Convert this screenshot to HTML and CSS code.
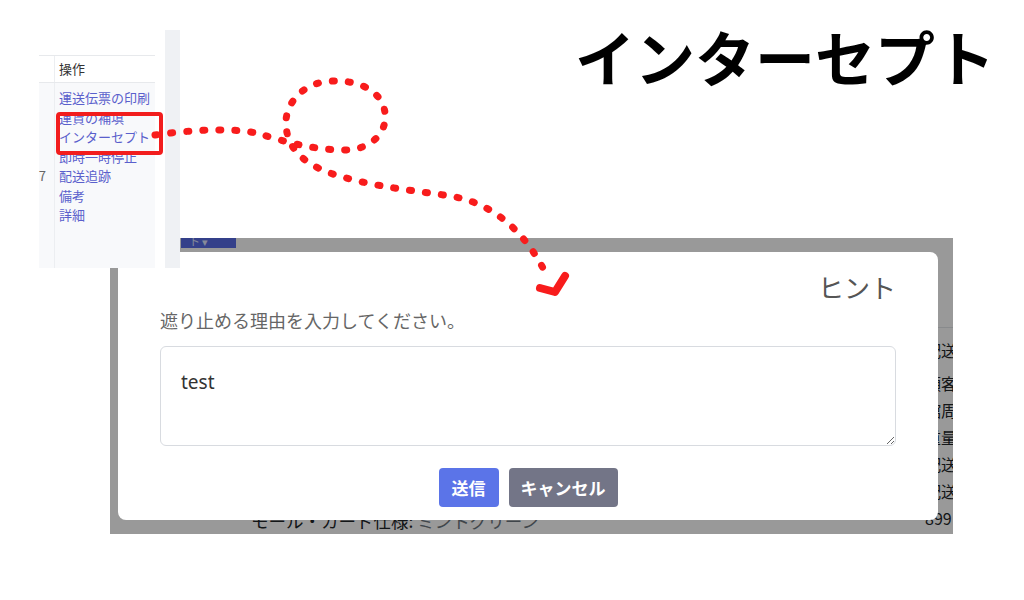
FILE: index.html
```html
<!DOCTYPE html>
<html lang="ja">
<head>
  <meta charset="UTF-8" />
  <meta name="viewport" content="width=device-width, initial-scale=1.0" />
  <title>インターセプト</title>
  <link rel="stylesheet" href="styles.css">
</head>
<body>
  <div class="canvas">

    <!-- Part 1: cropped order table, operations column -->
    <div class="snippet">
      <div class="tbl">
        <div class="tbl-top"></div>
        <div class="tbl-head">
          <div class="cell-id"></div>
          <div class="cell-ops">操作</div>
        </div>
        <div class="tbl-body">
          <div class="cell-id">
            <span></span><span></span><span></span><span></span><span>7</span>
          </div>
          <div class="cell-ops">
            <a>運送伝票の印刷</a>
            <a>運賃の補填</a>
            <a>インターセプト</a>
            <a>即時一時停止</a>
            <a>配送追跡</a>
            <a>備考</a>
            <a>詳細</a>
          </div>
        </div>
      </div>
      <div class="tbl-gap"></div>
      <div class="tbl-strip"></div>
      <div class="mark"></div>
    </div>

    <h1 class="title">インターセプト</h1>

    <!-- Part 2: the dialog opened from the link -->
    <div class="shot">
      <div class="page">
        <div class="tabbar"><div class="tab">ト ▾</div></div>
        <p class="spec">モール・カード仕様: <span>ミントグリーン</span></p>
        <div class="side">
          <div class="side-head">配送情報</div>
          <div class="side-row">顧客名</div>
          <div class="side-row">館周辺</div>
          <div class="side-row">重量</div>
          <div class="side-row">配送方法</div>
          <div class="side-row">配送状況</div>
          <div class="side-row">899</div>
        </div>
      </div>
      <div class="backdrop">
        <div class="modal">
          <h2 class="modal-title">ヒント</h2>
          <p class="modal-label">遮り止める理由を入力してください。</p>
          <textarea class="modal-input">test</textarea>
          <div class="modal-actions">
            <button class="btn btn-primary">送信</button>
            <button class="btn btn-secondary">キャンセル</button>
          </div>
        </div>
      </div>
    </div>

    <!-- dotted arrow from the link to the dialog -->
    <svg class="arrow" width="1024" height="600" viewBox="0 0 1024 600">
      <path class="dots" d="M155,135 C190,130 235,127 260,134 C285,142 315,150 344,150 C375,150 390,128 384,108 C378,88 355,80 332,81 C305,82 288,100 286,120 C285,145 300,162 330,173 C370,187 420,191 450,196 C500,204 530,240 548,278" />
      <path class="head" d="M540,288 L555,292 L565,276" />
    </svg>

  </div>
</body>
</html>
```

FILE: styles.css
```css
* {
  box-sizing: border-box;
}

body {
  margin: 0;
  background: #fff;
  font-family: "Noto Sans", "Noto Sans CJK JP", sans-serif;
}

.canvas {
  position: relative;
  width: 1024px;
  height: 600px;
  overflow: hidden;
}

/* table snippet */
.snippet {
  position: absolute;
  left: 39px;
  top: 30px;
  width: 141px;
  height: 238px;
  display: flex;
  background: #fff;
  z-index: 2;
  font-family: "Noto Sans CJK JP", sans-serif;
  font-size: 13px;
}

.tbl {
  width: 116px;
  display: flex;
  flex-direction: column;
}

.tbl-top {
  height: 25px;
}

.tbl-head {
  height: 28px;
  display: flex;
  border-top: 1px solid #e7e9ec;
  border-bottom: 1px solid #e7e9ec;
  color: #333;
  line-height: 26px;
}

.tbl-body {
  flex: 1;
  display: flex;
  background: #f8f9fb;
  padding-top: 5px;
  line-height: 19.5px;
}

.cell-id {
  width: 16px;
  border-right: 1px solid #eceef1;
  display: flex;
  flex-direction: column;
  align-items: flex-end;
  padding-right: 8px;
  color: #666;
}

.tbl-body .cell-id {
  margin-top: -5px;
  padding-top: 5px;
}

.cell-id span {
  height: 19.5px;
}

.cell-ops {
  flex: 1;
  padding-left: 4px;
  display: flex;
  flex-direction: column;
}

.cell-ops a {
  color: #5a60cc;
  white-space: nowrap;
}

.tbl-gap {
  width: 10px;
}

.tbl-strip {
  width: 15px;
  background: #eff1f4;
}

.mark {
  position: absolute;
  left: 17px;
  top: 82px;
  width: 107px;
  height: 43px;
  border: 4px solid #f21d1d;
  border-radius: 4px;
}

.title {
  position: absolute;
  left: 575px;
  top: 26px;
  margin: 0;
  font-family: "Noto Sans CJK JP", sans-serif;
  font-size: 60px;
  line-height: 1;
  font-weight: 700;
  color: #000;
}

/* dialog screenshot */
.shot {
  position: absolute;
  left: 110px;
  top: 238px;
  width: 843px;
  height: 296px;
  overflow: hidden;
  z-index: 1;
}

.page {
  height: 100%;
  background: #fff;
  display: grid;
  grid-template-columns: 141px 674px 1fr;
  grid-template-rows: 10px 1fr;
  color: #212529;
  font-family: "Noto Sans CJK JP", sans-serif;
}

.tabbar {
  grid-column: 1 / -1;
}

.tab {
  margin-left: 71px;
  width: 55px;
  height: 10px;
  background: #576ce6;
  color: #dfe4ff;
  font-size: 11px;
  line-height: 6px;
  padding-left: 8px;
}

.spec {
  grid-column: 2;
  grid-row: 2;
  align-self: end;
  margin: 0 0 3px;
  font-size: 17.5px;
  line-height: 20px;
  white-space: nowrap;
}

.spec span {
  color: #6c757d;
}

.side {
  grid-column: 3;
  grid-row: 2;
  padding-top: 79px;
  font-size: 16px;
  white-space: nowrap;
}

.side-head {
  border-top: 1px solid #e3e6ea;
  padding: 12px 0 10px;
  line-height: 20px;
}

.side-row {
  line-height: 27px;
}

.backdrop {
  position: absolute;
  inset: 0;
  background: rgba(0, 0, 0, 0.4);
  padding: 14px 15px 14px 8px;
}

.modal {
  height: 100%;
  background: #fff;
  border-radius: 8px;
  padding: 20px 42px 13px;
  display: flex;
  flex-direction: column;
}

.modal-title {
  margin: 0;
  text-align: right;
  font-family: "Noto Sans CJK JP", sans-serif;
  font-size: 26px;
  line-height: 30px;
  font-weight: 400;
  color: #555;
}

.modal-label {
  margin: 5px 0 0;
  font-family: "Noto Sans CJK JP", sans-serif;
  font-size: 18px;
  line-height: 26px;
  color: #666;
}

.modal-input {
  margin-top: 13px;
  width: 100%;
  height: 100px;
  border: 1px solid #d8dbe0;
  border-radius: 6px;
  padding: 22px 20px;
  font-family: "Noto Sans", sans-serif;
  font-size: 19px;
  line-height: 27px;
  color: #333;
  resize: vertical;
}

.modal-actions {
  margin-top: 22px;
  display: flex;
  justify-content: center;
  gap: 10px;
}

.btn {
  height: 39px;
  border: 0;
  border-radius: 4px;
  padding: 0 13px;
  color: #fff;
  font-family: "Noto Sans CJK JP", sans-serif;
  font-size: 17px;
  font-weight: 700;
  line-height: 39px;
}

.btn-primary {
  background: #5b74e8;
}

.btn-secondary {
  background: #737587;
  padding: 0 12px;
}

/* arrow overlay */
.arrow {
  position: absolute;
  left: 0;
  top: 0;
  z-index: 3;
  pointer-events: none;
}

.arrow .dots {
  fill: none;
  stroke: #f81c1c;
  stroke-width: 7;
  stroke-linecap: round;
  stroke-dasharray: 2 14;
}

.arrow .head {
  fill: none;
  stroke: #f81c1c;
  stroke-width: 8;
  stroke-linecap: round;
  stroke-linejoin: round;
}
```
